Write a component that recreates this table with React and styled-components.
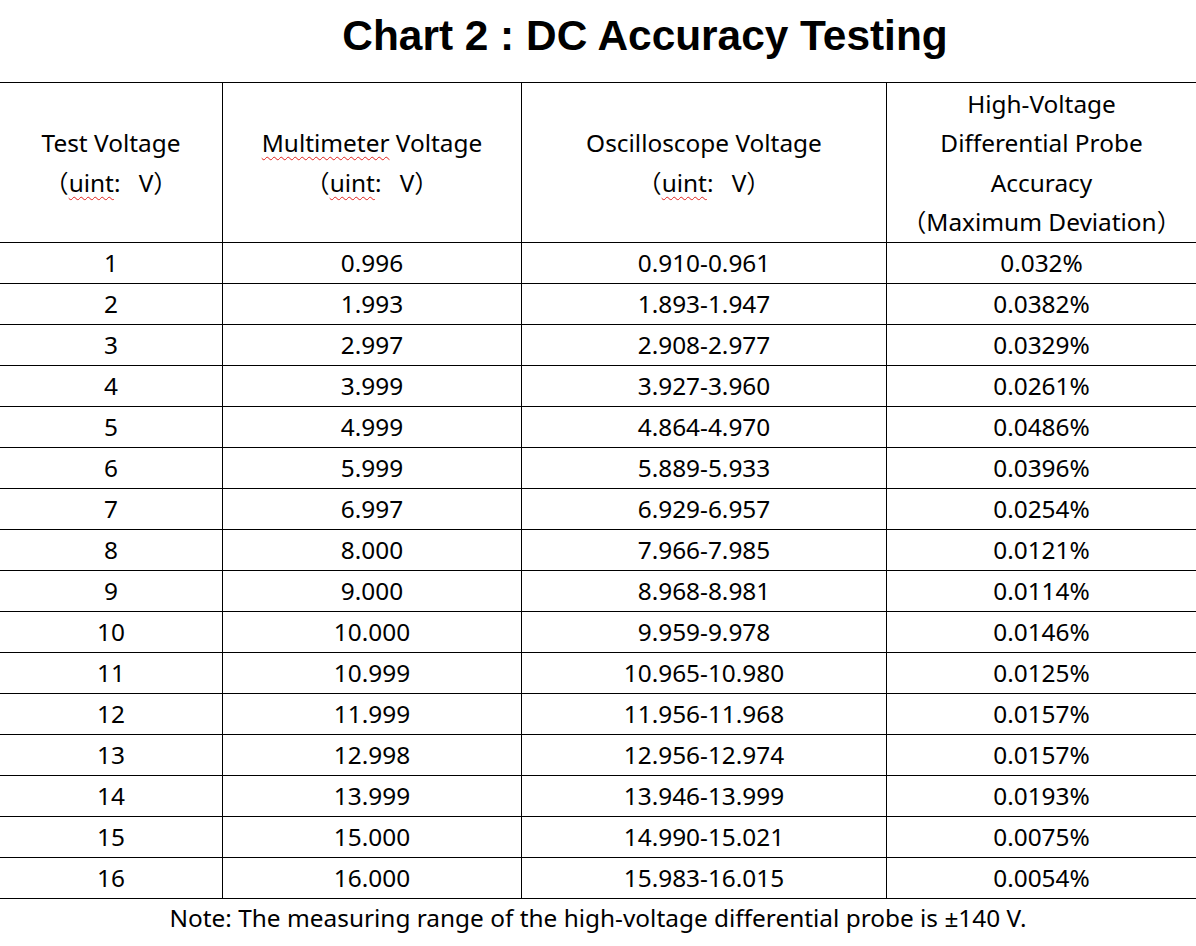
import React from 'react'
import styled, { createGlobalStyle } from 'styled-components'

const GlobalStyle = createGlobalStyle`
  html, body {
    margin: 0;
    padding: 0;
    background: #fff;
  }
`

const Page = styled.div`
  width: 1196px;
  height: 946px;
  overflow: hidden;
  background: #fff;
  color: #000;
  font-family: "Noto Sans", "Open Sans", "Noto Sans CJK SC", sans-serif;
`

const Title = styled.h1`
  margin: 0;
  height: 82px;
  padding-top: 12px;
  box-sizing: border-box;
  text-align: center;
  font-family: "Liberation Sans", Arial, sans-serif;
  font-weight: bold;
  font-size: 42.4px;
  line-height: 48px;
  padding-left: 94px;
`

const Table = styled.table`
  border-collapse: collapse;
  table-layout: fixed;
  width: 1193px;
  margin-left: -1px;
  font-size: 24.4px;
`

const HeadCell = styled.th`
  font-weight: normal;
  border: 1px solid #000;
  height: 159px;
  padding: 0;
  line-height: 39.5px;
  text-align: center;
  vertical-align: middle;
  width: ${p => p.$w}px;
`

const Cell = styled.td`
  border: 1px solid #000;
  height: 40px;
  padding: 0;
  text-align: center;
  vertical-align: middle;
  line-height: 40px;
`

const Squiggle = styled.span`
  text-decoration: underline wavy #e0201b;
  text-decoration-thickness: 1px;
  text-underline-offset: 4px;
`

const Note = styled.p`
  margin: 0;
  padding-top: 1px;
  text-align: center;
  font-size: 24.4px;
  line-height: 36px;
`

const rows = [
  ['1', '0.996', '0.910-0.961', '0.032%'],
  ['2', '1.993', '1.893-1.947', '0.0382%'],
  ['3', '2.997', '2.908-2.977', '0.0329%'],
  ['4', '3.999', '3.927-3.960', '0.0261%'],
  ['5', '4.999', '4.864-4.970', '0.0486%'],
  ['6', '5.999', '5.889-5.933', '0.0396%'],
  ['7', '6.997', '6.929-6.957', '0.0254%'],
  ['8', '8.000', '7.966-7.985', '0.0121%'],
  ['9', '9.000', '8.968-8.981', '0.0114%'],
  ['10', '10.000', '9.959-9.978', '0.0146%'],
  ['11', '10.999', '10.965-10.980', '0.0125%'],
  ['12', '11.999', '11.956-11.968', '0.0157%'],
  ['13', '12.998', '12.956-12.974', '0.0157%'],
  ['14', '13.999', '13.946-13.999', '0.0193%'],
  ['15', '15.000', '14.990-15.021', '0.0075%'],
  ['16', '16.000', '15.983-16.015', '0.0054%'],
]

const Unit = () => <>（<Squiggle>uint</Squiggle>:{'\u2002\u2005'}V）</>

export default function App () {
  return <>
    <GlobalStyle />
    <Page>
      <Title>Chart 2 : DC Accuracy Testing</Title>
      <Table>
        <thead>
          <tr>
            <HeadCell $w={222}>Test Voltage<br /><Unit /></HeadCell>
            <HeadCell $w={298}><Squiggle>Multimeter</Squiggle> Voltage<br /><Unit /></HeadCell>
            <HeadCell $w={364}>Oscilloscope Voltage<br /><Unit /></HeadCell>
            <HeadCell $w={309}>High-Voltage<br />Differential Probe<br />Accuracy<br />（Maximum Deviation）</HeadCell>
          </tr>
        </thead>
        <tbody>
          {rows.map(row => <tr key={row[0]}>
            {row.map((value, i) => <Cell key={i}>{value}</Cell>)}
          </tr>)}
        </tbody>
      </Table>
      <Note>Note: The measuring range of the high-voltage differential probe is ±140 V.</Note>
    </Page>
  </>
}
